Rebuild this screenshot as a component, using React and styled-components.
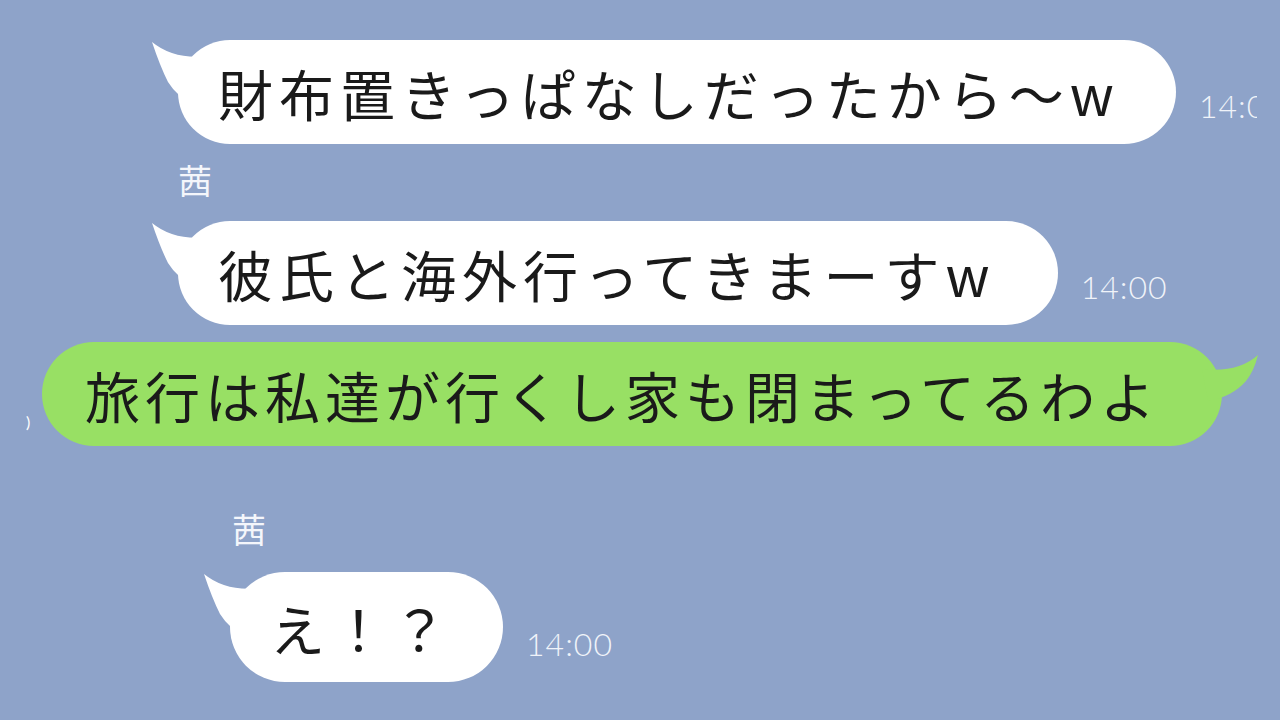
import React from 'react'
import styled, { createGlobalStyle } from 'styled-components'

const GlobalStyle = createGlobalStyle`
    html, body {
        margin: 0;
        padding: 0;
        width: 1280px;
        height: 720px;
        overflow: hidden;
        background: #8ea3c9;
    }
`

const messages = [
    {
        id: 1,
        text: '財布置きっぱなしだったから～w',
        time: '14:00',
        clip: 58,
        indent: 178,
        gap: 40,
        pad: 56,
        spacing: 6,
    },
    {
        id: 2,
        name: '茜',
        nameIndent: 178,
        nameGap: 18,
        text: '彼氏と海外行ってきまーすw',
        time: '14:00',
        indent: 178,
        gap: 23,
        pad: 62,
        spacing: 6,
    },
    { id: 3, mine: true, text: '旅行は私達が行くし家も閉まってるわよ', indent: 42, gap: 17, pad: 62, spacing: 5 },
    {
        id: 4,
        name: '茜',
        nameIndent: 232,
        nameGap: 65,
        text: 'え！？',
        time: '14:00',
        indent: 230,
        gap: 25,
        pad: 50,
        spacing: 6,
        tall: true,
    },
]

const LeftTail = ({ color }) => (
    <TailSvg $side="left" width="60" height="64" viewBox="0 0 60 64">
        <path d="M0 0 Q 22 18 56 14 L 40 60 Q 26 56 16 40 Q 8 24 0 0 Z" fill={color} />
    </TailSvg>
)

const RightTail = ({ color }) => (
    <TailSvg $side="right" width="60" height="50" viewBox="0 0 60 50">
        <path d="M60 0 Q 40 18 4 14 L 10 46 Q 34 42 48 26 Q 56 16 60 0 Z" fill={color} />
    </TailSvg>
)

const App = () => {
    return (
        <Screen>
            <GlobalStyle />
            {messages.map((m) => (
                <Block key={m.id}>
                    {m.name && (
                        <Name $indent={m.nameIndent} $top={m.nameGap}>
                            {m.name}
                        </Name>
                    )}
                    <Row $indent={m.indent} $top={m.gap}>
                        <Bubble $mine={m.mine} $tall={m.tall} $pad={m.pad}>
                            {m.mine ? <RightTail color="#98e064" /> : <LeftTail color="#ffffff" />}
                            <BubbleText $spacing={m.spacing}>{m.text}</BubbleText>
                        </Bubble>
                        {m.time && <Time $clip={m.clip}>{m.time}</Time>}
                    </Row>
                </Block>
            ))}
            <Stray>)</Stray>
        </Screen>
    )
}

export default App

const Screen = styled.div`
    position: relative;
    width: 1280px;
    height: 720px;
    overflow: hidden;
    background: #8ea3c9;
    display: flex;
    flex-direction: column;
    font-family: 'Noto Sans CJK JP', 'Noto Sans', sans-serif;
`

const Block = styled.div`
    display: flex;
    flex-direction: column;
`

const Name = styled.div`
    margin: ${(p) => p.$top}px 0 0 ${(p) => p.$indent}px;
    font-size: 34px;
    line-height: 36px;
    color: #f4f6fb;
`

const Row = styled.div`
    display: flex;
    align-items: flex-end;
    margin: ${(p) => p.$top}px 0 0 ${(p) => p.$indent}px;
`

const Bubble = styled.div`
    position: relative;
    height: ${(p) => (p.$tall ? 110 : 104)}px;
    padding: 0 ${(p) => p.$pad}px 0 ${(p) => (p.$mine ? 43 : 40)}px;
    border-radius: 56px;
    background: ${(p) => (p.$mine ? '#98e064' : '#ffffff')};
    display: flex;
    align-items: center;
`

const TailSvg = styled.svg`
    position: absolute;
    top: ${(p) => (p.$side === 'left' ? 2 : 13)}px;
    ${(p) => (p.$side === 'left' ? 'left: -26px;' : 'right: -36px;')}
`

const BubbleText = styled.span`
    position: relative;
    font-size: 55px;
    letter-spacing: ${(p) => p.$spacing}px;
    line-height: 1;
    color: #1a1a1a;
    white-space: nowrap;
`

const Time = styled.span`
    margin: 0 0 19px 23px;
    font-family: 'Lato', 'Noto Sans', sans-serif;
    font-weight: 300;
    font-size: 32px;
    line-height: 38px;
    letter-spacing: 1px;
    color: #f0f3f9;
    white-space: nowrap;
    flex-shrink: 0;
    ${(p) => (p.$clip ? `max-width: ${p.$clip}px; overflow: hidden;` : '')}
`

const Stray = styled.span`
    position: absolute;
    left: 26px;
    top: 412px;
    font-size: 16px;
    color: #ffffff;
    font-family: 'Lato', sans-serif;
`
